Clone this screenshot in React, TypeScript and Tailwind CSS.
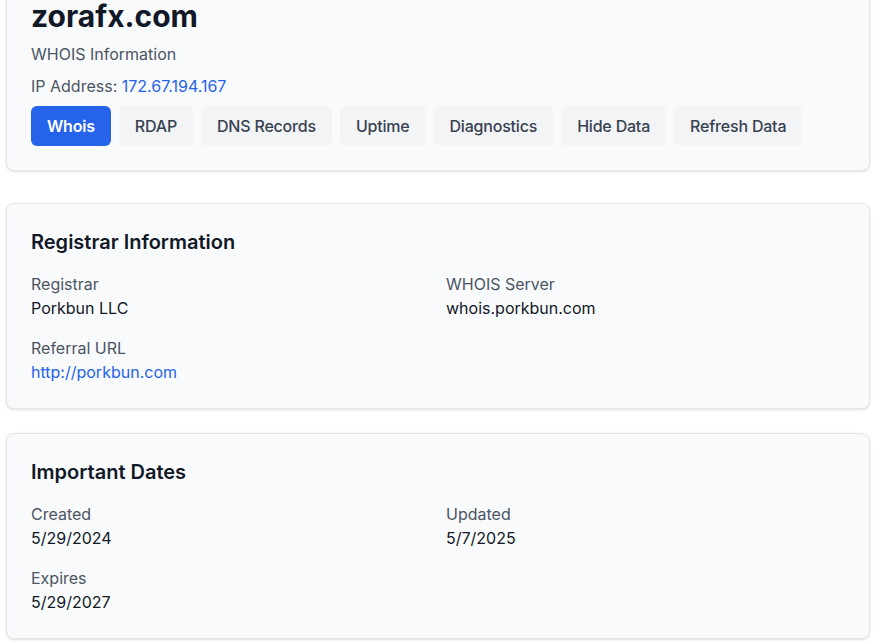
const tabs = ["Whois", "RDAP", "DNS Records", "Uptime", "Diagnostics", "Hide Data", "Refresh Data"];

type Field = { label: string; value: string; href?: string };

const registrar: Field[] = [
  { label: "Registrar", value: "Porkbun LLC" },
  { label: "WHOIS Server", value: "whois.porkbun.com" },
  { label: "Referral URL", value: "http://porkbun.com", href: "http://porkbun.com" },
];

const dates: Field[] = [
  { label: "Created", value: "5/29/2024" },
  { label: "Updated", value: "5/7/2025" },
  { label: "Expires", value: "5/29/2027" },
];

function InfoCard({ title, fields, className = "" }: { title: string; fields: Field[]; className?: string }) {
  return (
    <section className={`rounded-lg border border-[#e5e7eb] bg-[#f9fafb] p-6 shadow-sm ${className}`}>
      <h2 className="mb-4 text-xl font-semibold text-[#111827]">{title}</h2>
      <div className="grid grid-cols-2 gap-4">
        {fields.map((f) => (
          <div key={f.label}>
            <div className="text-base text-[#4b5563]">{f.label}</div>
            {f.href ? (
              <a href={f.href} className="text-base text-[#2563eb]">
                {f.value}
              </a>
            ) : (
              <div className="text-base text-[#111827]">{f.value}</div>
            )}
          </div>
        ))}
      </div>
    </section>
  );
}

export default function App() {
  return (
    <div className="min-h-screen overflow-hidden bg-white font-['Inter',sans-serif]">
      <div className="-mt-[27px] ml-[6px] w-[864px]">
        {/* Domain header with lookup tabs */}
        <section className="mb-8 rounded-lg border border-[#e5e7eb] bg-[#f9fafb] p-6 shadow-sm">
          <h1 className="mb-2 text-3xl font-bold text-[#111827]">zorafx.com</h1>
          <p className="mb-2 text-base text-[#4b5563]">WHOIS Information</p>
          <p className="mb-2 text-base text-[#4b5563]">
            IP Address: <span className="text-[#2563eb]">172.67.194.167</span>
          </p>
          <div className="flex gap-2">
            {tabs.map((t, i) => (
              <button
                key={t}
                className={
                  i === 0
                    ? "rounded-md bg-[#2563eb] px-4 py-2 text-base font-semibold tracking-[-0.2px] text-white"
                    : "rounded-md bg-[#f3f4f6] px-4 py-2 text-base font-medium tracking-[-0.2px] text-[#374151]"
                }
              >
                {t}
              </button>
            ))}
          </div>
        </section>

        <InfoCard title="Registrar Information" fields={registrar} className="mb-6" />
        <InfoCard title="Important Dates" fields={dates} />
      </div>
    </div>
  );
}
